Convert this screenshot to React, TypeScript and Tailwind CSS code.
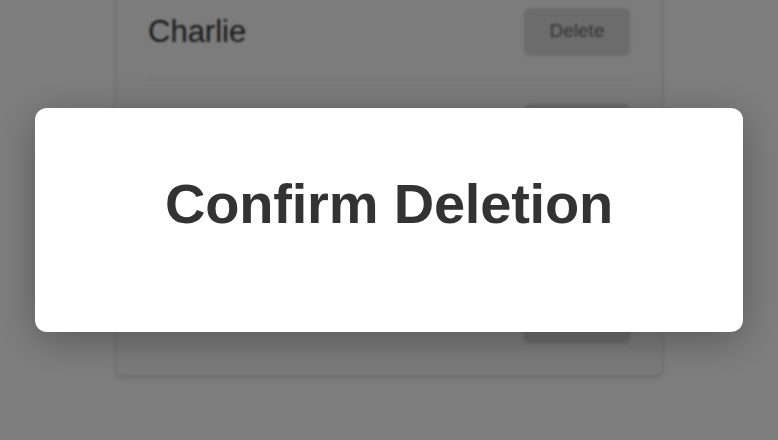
import { useState } from "react";

const USERS = ["Charlie", "Dana", "Evan", "Fiona"];

function UserRow({ name, onDelete }: { name: string; onDelete: () => void }) {
  return (
    <li className="flex items-center justify-between border-b border-[#e8e8e8] py-6 last:border-b-0 last:pb-0">
      <span className="text-[31px] leading-none text-[#333]">{name}</span>
      <button
        onClick={onDelete}
        className="flex h-[47px] w-[106px] items-center justify-center rounded-md bg-[#d9d9d9] text-[19px] text-[#6a6a6a] shadow-sm"
      >
        Delete
      </button>
    </li>
  );
}

export default function App() {
  const [pending, setPending] = useState<string | null>("Charlie");

  return (
    <div
      className="relative h-[440px] w-full overflow-hidden bg-[#fcfcfc]"
      style={{ fontFamily: '"Liberation Sans", Arial, sans-serif' }}
    >
      {/* User list card */}
      <div className="mx-auto -mt-[49px] w-[548px] rounded-lg border border-[#e2e2e2] bg-[#f8f8f8] p-8 shadow-md">
        <ul>
          {USERS.map((u) => (
            <UserRow key={u} name={u} onDelete={() => setPending(u)} />
          ))}
        </ul>
      </div>

      {/* Overlay + dialog */}
      {pending && (
        <div className="absolute inset-0 flex items-center justify-center bg-black/50 backdrop-blur-[1px]">
          <div className="h-[224px] w-[708px] rounded-xl bg-white pt-[64px] text-center shadow-[0_8px_40px_rgba(0,0,0,0.3)]">
            <h2 className="text-[56px] font-bold leading-[64px] tracking-[-0.2px] text-[#333]">
              Confirm Deletion
            </h2>
          </div>
        </div>
      )}
    </div>
  );
}
